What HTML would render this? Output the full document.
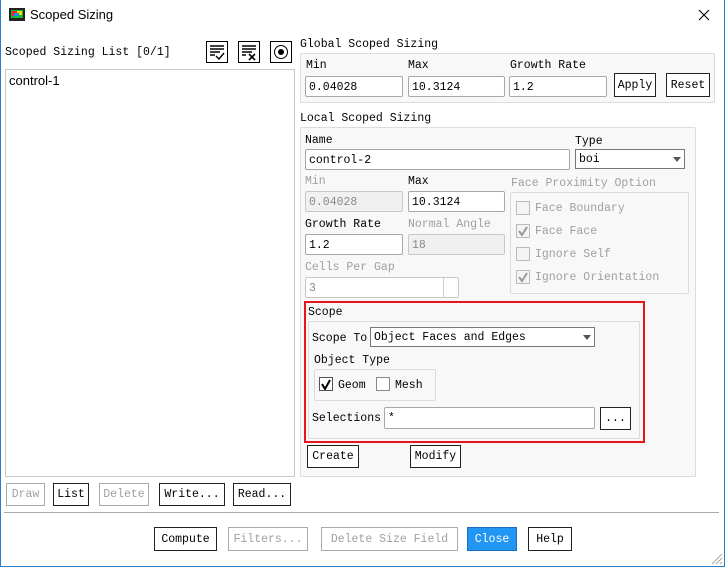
<!DOCTYPE html>
<html><head><meta charset="utf-8"><style>
*{box-sizing:border-box;margin:0;padding:0}
body{width:725px;height:567px;background:#fff;position:relative;overflow:hidden;font-family:"Liberation Mono","Noto Sans CJK SC",monospace;font-size:11.5px;color:#000}
.a{position:absolute;white-space:nowrap}
.lbl{line-height:14px;margin-top:1px}
.in{position:absolute;border:1px solid #a8a8a8;border-radius:2px;background:#fff;padding-left:3px;line-height:21px;white-space:nowrap}
.dis{background:#f0f0f0;color:#8a8a8a;border-color:#c8c8c8}
.btn{position:absolute;border:1px solid #222;background:#fff;text-align:center;white-space:nowrap}
.btn.d{border-color:#aaa;color:#a0a0a0}
.grp{position:absolute;border:1px solid #dcdcdc;background:#f8f8f8;border-radius:2px}
.g{color:#a0a0a0}
.cb{position:absolute;width:14px;height:14px;border:1px solid #bbb;background:#f4f4f4}
.cbk{border-color:#555;background:#fff}
.sel{position:absolute;border:1px solid #777;background:#fff;padding-left:3px;line-height:19px}
.arr{position:absolute;right:3px;top:7px;width:0;height:0;border-left:4px solid transparent;border-right:4px solid transparent;border-top:5px solid #555}
</style></head><body>
<div class="a" style="left:0;top:0;width:725px;height:567px;border:1px solid #2a7cc8;border-top:none"></div>
<svg class="a" style="left:9px;top:8px" width="16" height="13"><rect width="16" height="13" fill="#222"/><rect x="2" y="2" width="12" height="8" fill="#1b3"/><rect x="3" y="3" width="5" height="5" fill="#e22"/><rect x="8" y="3" width="5" height="4" fill="#fd0"/><rect x="5" y="5" width="5" height="3" fill="#28f"/></svg>
<div class="a" style="left:30px;top:7px;font-family:'Liberation Sans',sans-serif;font-size:13px">Scoped Sizing</div>
<svg class="a" style="left:698px;top:9px" width="12" height="12"><path d="M1 1L11 11M11 1L1 11" stroke="#000" stroke-width="1.1"/></svg>

<div class="a lbl" style="left:5px;top:45px">Scoped Sizing List [0/1]</div>
<svg class="a" style="left:206px;top:41px" width="88" height="22">
<rect x=".5" y=".5" width="21" height="21" fill="#fff" stroke="#000"/><path d="M4 5h14M4 8h14M4 11h10M4 14h5M10 15l3 3 5-6" stroke="#000" stroke-width="1.4" fill="none"/>
<rect x="32.5" y=".5" width="21" height="21" fill="#fff" stroke="#000"/><path d="M36 5h14M36 8h14M36 11h10M36 14h4M43 13l6 6M49 13l-6 6" stroke="#000" stroke-width="1.6" fill="none"/>
<rect x="64.5" y=".5" width="21" height="21" fill="#fff" stroke="#000"/><circle cx="75" cy="11" r="6.5" fill="none" stroke="#000"/><circle cx="75" cy="11" r="3" fill="#000"/>
</svg>
<div class="a" style="left:5px;top:69px;width:290px;height:408px;border:1px solid #c8c8c8"></div>
<div class="a" style="left:9px;top:73px;font-family:'Liberation Sans',sans-serif;font-size:13px">control-1</div>

<div class="a lbl" style="left:300px;top:37px">Global Scoped Sizing</div>
<div class="grp" style="left:300px;top:53px;width:415px;height:50px"></div>
<div class="a lbl" style="left:306px;top:58px">Min</div>
<div class="a lbl" style="left:408px;top:58px">Max</div>
<div class="a lbl" style="left:510px;top:58px">Growth Rate</div>
<div class="in" style="left:305px;top:76px;width:98px;height:21px">0.04028</div>
<div class="in" style="left:408px;top:76px;width:97px;height:21px">10.3124</div>
<div class="in" style="left:509px;top:76px;width:98px;height:21px">1.2</div>
<div class="btn" style="left:614px;top:73px;width:42px;height:24px;line-height:23px">Apply</div>
<div class="btn" style="left:666px;top:73px;width:44px;height:24px;line-height:23px">Reset</div>

<div class="a lbl" style="left:300px;top:111px">Local Scoped Sizing</div>
<div class="grp" style="left:300px;top:127px;width:396px;height:350px"></div>
<div class="a lbl" style="left:305px;top:133px">Name</div>
<div class="a lbl" style="left:575px;top:134px">Type</div>
<div class="in" style="left:305px;top:149px;width:265px;height:21px">control-2</div>
<div class="sel" style="left:575px;top:149px;width:110px;height:20px">boi<div class="arr"></div></div>
<div class="a lbl g" style="left:305px;top:174px">Min</div>
<div class="a lbl" style="left:408px;top:174px">Max</div>
<div class="in dis" style="left:305px;top:191px;width:98px;height:21px">0.04028</div>
<div class="in" style="left:408px;top:191px;width:97px;height:21px">10.3124</div>
<div class="a lbl g" style="left:511px;top:176px">Face Proximity Option</div>
<div class="grp" style="left:510px;top:192px;width:179px;height:102px"></div>
<div class="cb" style="left:516px;top:201px"></div><div class="a lbl g" style="left:535px;top:201px">Face Boundary</div>
<div class="cb" style="left:516px;top:224px"><svg width="12" height="12" style="position:absolute;left:0;top:0"><path d="M2 6l3 4 5-8" stroke="#999" stroke-width="2" fill="none"/></svg></div><div class="a lbl g" style="left:535px;top:224px">Face Face</div>
<div class="cb" style="left:516px;top:247px"></div><div class="a lbl g" style="left:535px;top:247px">Ignore Self</div>
<div class="cb" style="left:516px;top:270px"><svg width="12" height="12" style="position:absolute;left:0;top:0"><path d="M2 6l3 4 5-8" stroke="#999" stroke-width="2" fill="none"/></svg></div><div class="a lbl g" style="left:535px;top:270px">Ignore Orientation</div>
<div class="a lbl" style="left:305px;top:217px">Growth Rate</div>
<div class="a lbl g" style="left:408px;top:217px">Normal Angle</div>
<div class="in" style="left:305px;top:234px;width:98px;height:21px">1.2</div>
<div class="in dis" style="left:408px;top:234px;width:97px;height:21px">18</div>
<div class="a lbl g" style="left:305px;top:260px">Cells Per Gap</div>
<div class="in dis" style="left:305px;top:277px;width:154px;height:21px;background:#fff">3</div>
<div class="a" style="left:443px;top:278px;width:1px;height:19px;background:#ccc"></div>

<div class="a" style="left:304px;top:301px;width:341px;height:142px;border:2px solid #e8141e"></div>
<div class="a lbl" style="left:308px;top:305px">Scope</div>
<div class="grp" style="left:308px;top:321px;width:332px;height:118px"></div>
<div class="a lbl" style="left:312px;top:331px">Scope To</div>
<div class="sel" style="left:370px;top:327px;width:225px;height:20px">Object Faces and Edges<div class="arr"></div></div>
<div class="a lbl" style="left:314px;top:353px">Object Type</div>
<div class="grp" style="left:314px;top:369px;width:122px;height:32px"></div>
<div class="cb cbk" style="left:319px;top:377px"><svg width="12" height="12" style="position:absolute;left:0;top:0"><path d="M2 6l3 5 5-9" stroke="#000" stroke-width="2" fill="none"/></svg></div>
<div class="a lbl" style="left:338px;top:378px">Geom</div>
<div class="cb cbk" style="left:376px;top:377px;border-color:#888"></div>
<div class="a lbl" style="left:395px;top:378px">Mesh</div>
<div class="a lbl" style="left:312px;top:411px">Selections</div>
<div class="in" style="left:384px;top:407px;width:211px;height:22px;line-height:22px">*</div>
<div class="btn" style="left:600px;top:407px;width:31px;height:23px;line-height:22px">...</div>
<div class="btn" style="left:307px;top:445px;width:52px;height:23px;line-height:22px">Create</div>
<div class="btn" style="left:410px;top:445px;width:51px;height:23px;line-height:22px">Modify</div>

<div class="btn d" style="left:6px;top:483px;width:39px;height:23px;line-height:22px">Draw</div>
<div class="btn" style="left:53px;top:483px;width:36px;height:23px;line-height:22px">List</div>
<div class="btn d" style="left:99px;top:483px;width:50px;height:23px;line-height:22px">Delete</div>
<div class="btn" style="left:159px;top:483px;width:66px;height:23px;line-height:22px">Write...</div>
<div class="btn" style="left:233px;top:483px;width:58px;height:23px;line-height:22px">Read...</div>
<div class="a" style="left:4px;top:512px;width:715px;height:1px;background:#aaa"></div>

<div class="btn" style="left:154px;top:527px;width:63px;height:24px;line-height:23px">Compute</div>
<div class="btn d" style="left:228px;top:527px;width:80px;height:24px;line-height:23px">Filters...</div>
<div class="btn d" style="left:321px;top:527px;width:137px;height:24px;line-height:23px">Delete Size Field</div>
<div class="btn" style="left:467px;top:527px;width:50px;height:24px;line-height:23px;background:#2196f3;border-color:#1a6fc0;color:#fff">Close</div>
<div class="btn" style="left:528px;top:527px;width:44px;height:24px;line-height:23px">Help</div>
<svg class="a" style="left:710px;top:552px" width="13" height="13"><path d="M12 2L2 12M12 6L6 12M12 10L10 12" stroke="#aaa"/></svg>
</body></html>
